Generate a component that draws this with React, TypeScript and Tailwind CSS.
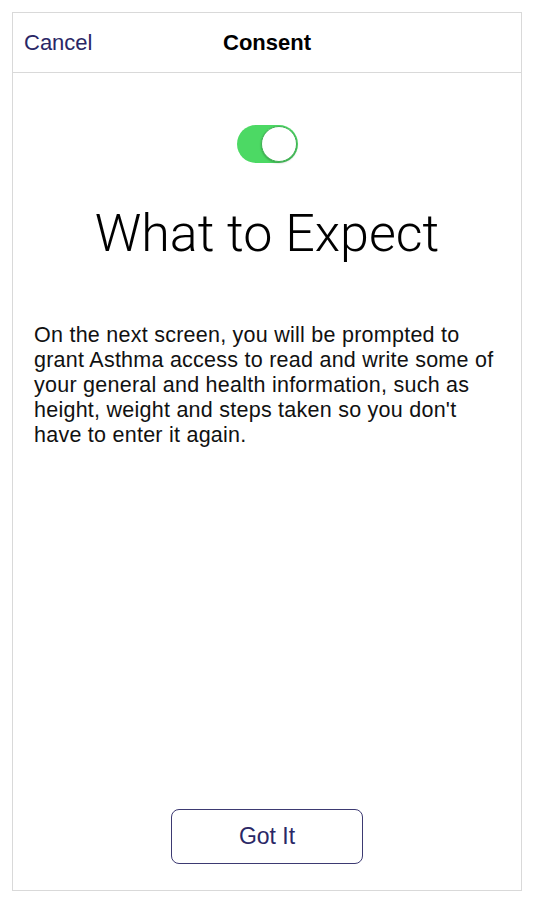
import { FC } from 'react'

const App: FC = () => {
  return (
    <div className="w-[534px] h-[903px] bg-white p-3 pb-3 font-['Liberation_Sans',Arial,sans-serif]">
      <div className="h-full flex flex-col border-[1.5px] border-[#d9d9d9]">
        <div className="h-[60px] shrink-0 flex items-center relative border-b-[1.5px] border-[#d9d9d9]">
          <button className="ml-[11px] text-[22px] text-[#2a2766]">Cancel</button>
          <h3 className="absolute left-0 right-0 text-center text-[22px] font-bold text-black pointer-events-none">Consent</h3>
        </div>

        <div className="flex-1 flex flex-col items-center">
          <div className="mt-[52px] w-[61px] h-[38px] rounded-full bg-[#4cd964] relative">
            <div className="absolute right-[1px] top-[1px] w-[36px] h-[36px] rounded-full bg-white border border-[#3fb153] shadow-[0_1px_2px_rgba(0,0,0,0.25)]" />
          </div>

          <h1 className="mt-[41px] text-[52px] leading-[60px] font-light text-black font-['Roboto','Liberation_Sans',sans-serif]">What to Expect</h1>

          <p className="mt-[59px] pl-[21px] pr-[12px] w-full text-[21.5px] leading-[25px] tracking-[0.25px] text-[#111]">
            On the next screen, you will be prompted to grant Asthma access to read and write some of your general and health information, such as height, weight and steps taken so you don't have to enter it again.
          </p>

          <div className="flex-1" />

          <button className="mb-[26px] w-[192px] h-[55px] rounded-lg border-[1.5px] border-[#3d3a72] text-[23px] text-[#2a2766]">Got It</button>
        </div>
      </div>
    </div>
  )
}

export default App
